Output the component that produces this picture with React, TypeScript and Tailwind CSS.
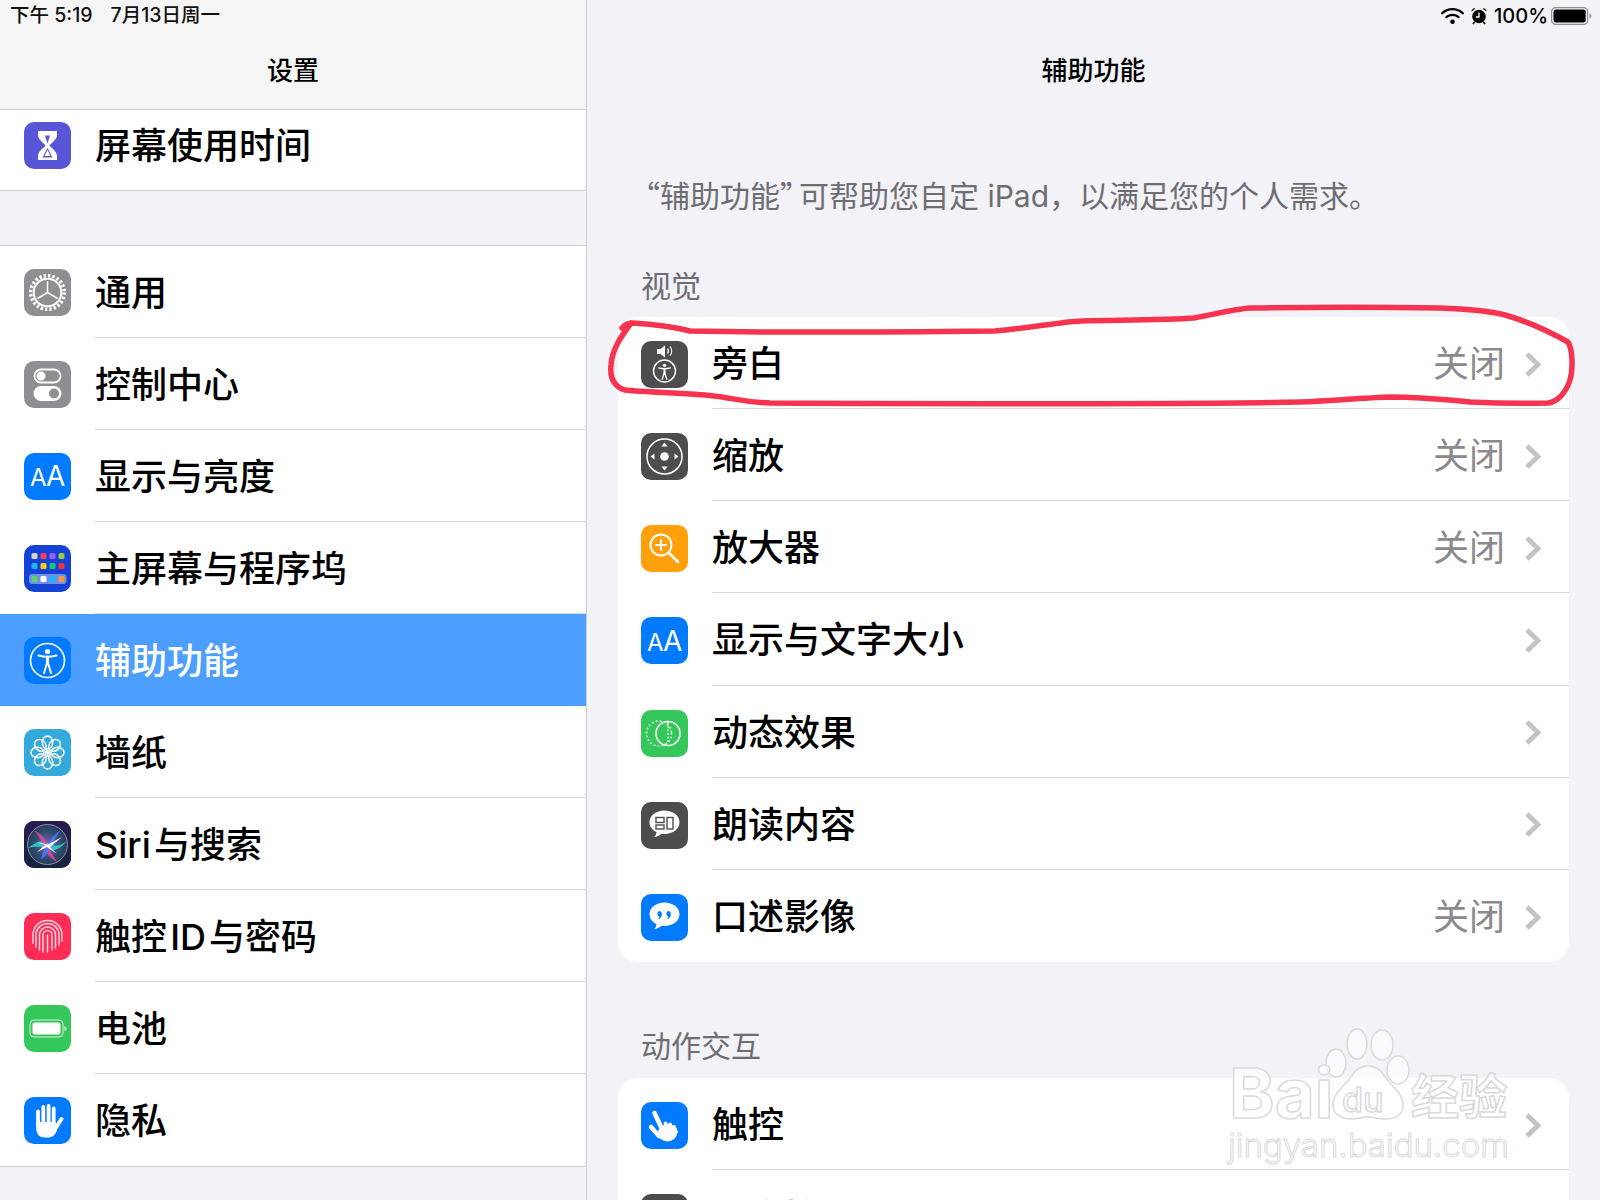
import type { ReactNode } from "react";
import { FaWifi } from "react-icons/fa6";

function IconBox({ bg, children }: { bg: string; children?: ReactNode }) {
  return (
    <div className={`flex h-[47px] w-[47px] shrink-0 items-center justify-center overflow-hidden rounded-[10px] ${bg}`}>
      {children}
    </div>
  );
}

function Svg({ children }: { children: ReactNode }) {
  return (
    <svg viewBox="0 0 47 47" className="h-[47px] w-[47px]" fill="none">
      {children}
    </svg>
  );
}

const HourglassIcon = () => (
  <Svg>
    <path d="M14 9h19v4c0 5-6 8-7.500 10.500C27 26 33 29 33 34v4H14v-4c0-5 6-8 7.500-10.500C20 21 14 18 14 13z" fill="#fff" />
    <path d="M21 13.500h5l-2.500 8zM23.500 26l5 9.500h-10z" fill="#5856d6" />
    <path d="M23.500 28l3 6h-6z" fill="#fff" />
  </Svg>
);

const GearIcon = () => (
  <Svg>
    <circle cx="23.500" cy="23.500" r="16.800" stroke="#fff" strokeWidth="3.500" strokeDasharray="2.400 1.998" />
    <circle cx="23.500" cy="23.500" r="13.800" stroke="#fff" strokeWidth="2" />
    <path d="M23.500 23.500V12M23.500 23.500l10 6M23.500 23.500l-10 6" stroke="#fff" strokeWidth="1.500" />
  </Svg>
);

const ToggleIcon = () => (
  <Svg>
    <rect x="10.500" y="8.500" width="26" height="13" rx="6.500" stroke="#fff" strokeWidth="1.800" />
    <circle cx="17" cy="15" r="4.500" fill="#fff" />
    <rect x="9.500" y="25" width="28" height="15" rx="7.500" fill="#fff" />
    <circle cx="30" cy="32.500" r="5" fill="#8e8e93" />
  </Svg>
);

const AaIcon = () => (
  <span className="text-[28px] leading-none font-normal tracking-[-0.500px] text-white">
    <span className="text-[24px]">A</span>A
  </span>
);

const HomeIcon = () => {
  const top = ["#d1d1d6", "#ff3b57", "#a05cff", "#9ccc3c"];
  const mid = ["#20b4ff", "#ffcc00", "#16c784", "#ff3030"];
  const dock = ["#5ad26a", "#ffffff", "#20b4ff", "#f59a3c"];
  return (
    <Svg>
      <rect x="5" y="29" width="37.500" height="10" rx="3" fill="#6f8fe8" />
      {top.map((c, i) => (
        <rect key={c} x={7.500 + i * 9} y="8" width="6" height="6" rx="1.500" fill={c} />
      ))}
      {mid.map((c, i) => (
        <rect key={c} x={7.500 + i * 9} y="18" width="6" height="6" rx="1.500" fill={c} />
      ))}
      {dock.map((c, i) => (
        <rect key={c} x={7.500 + i * 9} y="31" width="6" height="6" rx="1.500" fill={c} />
      ))}
    </Svg>
  );
};

const Figure = ({ cx, cy, s }: { cx: number; cy: number; s: number }) => (
  <g transform={`translate(${cx} ${cy}) scale(${s})`} stroke="#fff" strokeLinecap="round">
    <circle cx="0" cy="-9.500" r="2.600" fill="#fff" stroke="none" />
    <path d="M-9 -5.500Q0 -3 9 -5.500" strokeWidth="2" />
    <path d="M0 -4V3" strokeWidth="3.200" />
    <path d="M-0.800 3L-3.500 12M0.800 3L3.500 12" strokeWidth="2" />
  </g>
);

const AccessIcon = () => (
  <Svg>
    <circle cx="23.500" cy="23.500" r="17" stroke="#fff" strokeWidth="1.700" />
    <Figure cx={23.500} cy={24} s={1} />
  </Svg>
);

const VoiceOverIcon = () => (
  <Svg>
    <path d="M16 8h3.500l4.500-3.500v12L19.500 13H16z" fill="#fff" />
    <path d="M26.500 7.500a4 4 0 0 1 0 5M29 5.500a7 7 0 0 1 0 9" stroke="#fff" strokeWidth="1.200" />
    <circle cx="23.500" cy="30" r="11" stroke="#fff" strokeWidth="1.400" />
    <Figure cx={23.500} cy={30.500} s={0.65} />
  </Svg>
);

const FlowerIcon = () => (
  <Svg>
    {[0, 45, 90, 135, 180, 225, 270, 315].map((a) => (
      <ellipse key={a} cx="23.500" cy="13.500" rx="5.200" ry="6.500" stroke="#fff" strokeWidth="1.500" transform={`rotate(${a} 23.500 23.500)`} />
    ))}
    <circle cx="23.500" cy="23.500" r="2.500" fill="#fff" />
  </Svg>
);

const SiriIcon = () => (
  <Svg>
    <defs>
      <radialGradient id="siriGlow" cx="50%" cy="50%" r="50%">
        <stop offset="0%" stopColor="#6a6ab8" />
        <stop offset="70%" stopColor="#2f4a6c" />
        <stop offset="100%" stopColor="#263f58" />
      </radialGradient>
      <linearGradient id="siriBack" x1="0" y1="0" x2="0" y2="1">
        <stop offset="0%" stopColor="#2a1a52" />
        <stop offset="100%" stopColor="#16233f" />
      </linearGradient>
    </defs>
    <rect width="47" height="47" fill="url(#siriBack)" />
    <circle cx="23.500" cy="23.500" r="20" fill="url(#siriGlow)" stroke="#8d8fa6" strokeWidth="1" />
    <path d="M4 27Q18 16 24 22Q32 28 43 20Q32 33 23 28Q14 24 4 27z" fill="#32d2c8" opacity=".85" />
    <path d="M10 9Q22 16 24 24Q28 33 33 41Q22 35 20 26Q17 18 10 9z" fill="#e0449a" opacity=".85" />
    <path d="M37 9Q28 15 24 23Q18 31 17 39Q25 32 27 25Q31 17 37 9z" fill="#4a7dff" opacity=".85" />
    <path d="M12 21L24 23.500L38 16L26 26L33 33L23 26L13 31L21 24z" fill="#fff" />
  </Svg>
);

const FingerIcon = () => (
  <Svg>
    <g stroke="#ffd6de" strokeWidth="1.500" strokeLinecap="round">
      <path d="M9 30V22a14.500 14.500 0 0 1 29 0v6" />
      <path d="M12 34V22a11.500 11.500 0 0 1 23 0v10" />
      <path d="M15.500 37V22a8 8 0 0 1 16 0v13" />
      <path d="M19 39V22a4.500 4.500 0 0 1 9 0v15" />
      <path d="M23.500 22v17" />
    </g>
  </Svg>
);

const BatteryIcon = () => (
  <Svg>
    <rect x="6" y="15" width="33" height="17" rx="4" stroke="#fff" strokeWidth="1" opacity=".8" />
    <rect x="8.500" y="17.500" width="28" height="12" rx="2" fill="#fff" />
    <path d="M40.500 21v5c1.500-.5 2-1.500 2-2.500s-.5-2-2-2.500z" fill="#fff" opacity=".8" />
  </Svg>
);

const PrivacyIcon = () => (
  <Svg>
    <g stroke="#fff" strokeLinecap="round">
      <path d="M14 14.500V28M19.300 10V27M24.600 9V27M29.700 11.500V28" strokeWidth="3.800" />
      <path d="M31 32L37.500 22" strokeWidth="4" />
    </g>
    <path d="M12.200 25h19.500v6c3-2 1 9-6.500 9.500h-5c-5 0-8-4-8-9z" fill="#fff" />
  </Svg>
);

const DpadIcon = () => (
  <Svg>
    <circle cx="23.500" cy="23.500" r="17.500" stroke="#fff" strokeWidth="1.500" />
    <circle cx="23.500" cy="23.500" r="4.300" fill="#fff" />
    <path d="M23.500 9.500l3 4h-6zM23.500 37.500l3-4h-6zM9.500 23.500l4-3v6zM37.500 23.500l-4-3v6z" fill="#fff" />
  </Svg>
);

const MagnifierIcon = () => (
  <Svg>
    <circle cx="20" cy="20" r="10.500" stroke="#fff" strokeWidth="2" />
    <path d="M15 20h10M20 15v10" stroke="#fff" strokeWidth="2" strokeLinecap="round" />
    <path d="M28 28l9 9" stroke="#fff" strokeWidth="2.600" strokeLinecap="round" />
  </Svg>
);

const MotionIcon = () => (
  <Svg>
    <circle cx="18" cy="23.500" r="12.500" stroke="#fff" strokeWidth="1.800" strokeDasharray="0.100 3.900" strokeLinecap="round" />
    <circle cx="27" cy="23.500" r="12" stroke="#fff" strokeWidth="1.600" />
    <path d="M27 13v21" stroke="#fff" strokeWidth="1.800" strokeDasharray="0.100 3.500" strokeLinecap="round" />
  </Svg>
);

const Bubble = () => <path d="M23.500 8.500c8.300 0 15 5 15 11.800S31.800 32 23.500 32c-1 0-2-.1-3-.2-2 2-4.500 3-7.500 3.200 1.500-1.200 2.300-2.700 2.500-5C11 28 8.500 24.500 8.500 20.300 8.500 13.500 15.200 8.500 23.500 8.500z" fill="#fff" />;

const SpeakIcon = () => (
  <Svg>
    <Bubble />
    <rect x="15" y="15.500" width="8" height="5" stroke="#4d4d4f" strokeWidth="1.400" />
    <rect x="15" y="23" width="8" height="4" stroke="#4d4d4f" strokeWidth="1.400" />
    <rect x="26" y="15.500" width="6" height="11.500" stroke="#4d4d4f" strokeWidth="1.400" />
  </Svg>
);

const QuoteIcon = () => (
  <Svg>
    <Bubble />
    <path d="M18 17a3 3 0 0 1 2.800 3.200c0 2.800-1.500 4.500-4 5 1-1 1.500-2 1.500-2.700a3 3 0 0 1-.3-5.500zM27 17a3 3 0 0 1 2.800 3.200c0 2.800-1.500 4.500-4 5 1-1 1.500-2 1.500-2.700a3 3 0 0 1-.3-5.500z" fill="#007aff" />
  </Svg>
);

const TapIcon = () => (
  <Svg>
    <g stroke="#fff" strokeLinecap="round">
      <path d="M13.500 11L21 27" strokeWidth="4.500" />
      <path d="M10 25l8 9" strokeWidth="4.500" />
      <path d="M24.500 21.500l2.500 6M29 22.500l2.500 6M33 25l2 5" strokeWidth="3.800" />
    </g>
    <ellipse cx="26.500" cy="31" rx="9.500" ry="8.500" fill="#fff" />
  </Svg>
);

const Chevron = () => (
  <svg viewBox="0 0 17 27" className="h-[27px] w-[17px] shrink-0" fill="none">
    <path d="M3 3l11 10.500L3 24" stroke="#c4c4c7" strokeWidth="5" />
  </svg>
);

type SideItem = { label: string; bg: string; icon: ReactNode; active?: boolean };

const sideItems: SideItem[] = [
  { label: "通用", bg: "bg-[#8e8e93]", icon: <GearIcon /> },
  { label: "控制中心", bg: "bg-[#8e8e93]", icon: <ToggleIcon /> },
  { label: "显示与亮度", bg: "bg-[#007aff]", icon: <AaIcon /> },
  { label: "主屏幕与程序坞", bg: "bg-[#1441d6]", icon: <HomeIcon /> },
  { label: "辅助功能", bg: "bg-[#007aff]", icon: <AccessIcon />, active: true },
  { label: "墙纸", bg: "bg-[#34aadc]", icon: <FlowerIcon /> },
  { label: "Siri\u200a与搜索", bg: "bg-[#1c1c3a]", icon: <SiriIcon /> },
  { label: "触控\u200aID\u200a与密码", bg: "bg-[#ff2d55]", icon: <FingerIcon /> },
  { label: "电池", bg: "bg-[#34c759]", icon: <BatteryIcon /> },
  { label: "隐私", bg: "bg-[#007aff]", icon: <PrivacyIcon /> },
];

function SideRow({ item, last }: { item: SideItem; last: boolean }) {
  return (
    <div className={`flex h-[92px] items-center pl-6 ${item.active ? "bg-[#4c9ffe]" : "bg-white"}`}>
      <IconBox bg={item.bg}>{item.icon}</IconBox>
      <div
        className={`ml-6 flex h-full flex-1 items-center border-b pt-[2px] text-[36px] font-medium ${
          item.active ? "border-transparent text-white" : last ? "border-transparent text-black" : "border-[#d8d8da] text-black"
        }`}
      >
        {item.label}
      </div>
    </div>
  );
}

function Sidebar() {
  return (
    <aside className="flex h-full w-[587px] shrink-0 flex-col overflow-hidden border-r border-[#cfcfd3] bg-[#f2f2f7]">
      <header className="h-[110px] shrink-0 border-b border-[#cfcfd3] bg-[#f5f5f5]">
        <div className="flex h-[32px] items-center pl-[10px] text-[19.500px] leading-none font-medium text-[#111]">
          <span>下午 5:19</span>
          <span className="ml-[18px]">7月13日周一</span>
        </div>
        <div className="mt-[20px] text-center text-[26px] leading-[38px] font-medium text-black">设置</div>
      </header>
      <div className="flex h-[81px] shrink-0 items-start border-b border-[#cfcfd3] bg-white pt-3 pl-6">
        <IconBox bg="bg-[#5856d6]">
          <HourglassIcon />
        </IconBox>
        <div className="ml-6 pt-[1px] text-[36px] leading-[47px] font-medium text-black">屏幕使用时间</div>
      </div>
      <div className="h-[54px] shrink-0" />
      <div className="shrink-0 border-y border-[#cfcfd3] bg-white">
        {sideItems.map((item, i) => (
          <SideRow key={item.label} item={item} last={i === sideItems.length - 1} />
        ))}
      </div>
    </aside>
  );
}

type MainItem = { label: string; bg: string; icon: ReactNode; value?: string };

const visionItems: MainItem[] = [
  { label: "旁白", bg: "bg-[#4d4d4f]", icon: <VoiceOverIcon />, value: "关闭" },
  { label: "缩放", bg: "bg-[#4d4d4f]", icon: <DpadIcon />, value: "关闭" },
  { label: "放大器", bg: "bg-[#ff9f0a]", icon: <MagnifierIcon />, value: "关闭" },
  { label: "显示与文字大小", bg: "bg-[#007aff]", icon: <AaIcon /> },
  { label: "动态效果", bg: "bg-[#34c759]", icon: <MotionIcon /> },
  { label: "朗读内容", bg: "bg-[#4d4d4f]", icon: <SpeakIcon /> },
  { label: "口述影像", bg: "bg-[#007aff]", icon: <QuoteIcon />, value: "关闭" },
];

const actionItems: MainItem[] = [
  { label: "触控", bg: "bg-[#007aff]", icon: <TapIcon /> },
  { label: "切换控制", bg: "bg-[#4d4d4f]", icon: null },
];

function MainRow({ item, last }: { item: MainItem; last: boolean }) {
  return (
    <div className="flex h-[92.150px] items-center pl-[23px]">
      <div className="mt-[3px]">
        <IconBox bg={item.bg}>{item.icon}</IconBox>
      </div>
      <div className={`ml-6 flex h-full flex-1 items-center pt-[3px] pr-7 ${last ? "" : "border-b border-[#d8d8da]"}`}>
        <span className="flex-1 text-[36px] font-medium text-black">{item.label}</span>
        {item.value && <span className="mr-[19px] text-[36px] text-[#8a8a8e]">{item.value}</span>}
        <Chevron />
      </div>
    </div>
  );
}

function AlarmIcon() {
  return (
    <svg viewBox="0 0 16 18" className="h-[18px] w-[16px]">
      <circle cx="8" cy="9.500" r="6.800" fill="#000" />
      <path d="M8 5.500v4.500H4.800" stroke="#fff" strokeWidth="1.300" fill="none" />
      <path d="M0.500 4.500a3 3 0 0 1 4-3zM15.500 4.500a3 3 0 0 0-4-3z" fill="#000" />
      <path d="M3.500 15l-1.500 2M12.500 15l1.500 2" stroke="#000" strokeWidth="1.500" />
    </svg>
  );
}

function BatteryStatus() {
  return (
    <svg viewBox="0 0 41 18" className="h-[18px] w-[41px]">
      <rect x="0.600" y="0.600" width="36" height="16.800" rx="4" fill="none" stroke="#8e8e93" strokeWidth="1.200" />
      <rect x="2.500" y="2.500" width="32.200" height="13" rx="2.500" fill="#000" />
      <path d="M38.500 6.500v5c1.200-.4 1.800-1.400 1.800-2.500s-.6-2.100-1.800-2.500z" fill="#8e8e93" />
    </svg>
  );
}

function Main() {
  return (
    <main className="h-full min-w-0 flex-1 overflow-hidden bg-[#f2f2f7]">
      <div className="flex h-[32px] items-center justify-end pr-[8px] text-black">
        <FaWifi className="h-[20px] w-[23px]" />
        <span className="ml-[7px]">
          <AlarmIcon />
        </span>
        <span className="mr-[3px] ml-[7px] text-[20px] leading-none font-medium">100%</span>
        <BatteryStatus />
      </div>
      <div className="mt-[20px] text-center text-[26px] leading-[38px] font-medium text-black">辅助功能</div>
      <p className="mt-[83px] pl-[43px] text-[30px] leading-[42px] whitespace-nowrap text-[#6d6d72]">
        <span className="font-['Noto_Sans_CJK_SC']">“</span>辅助功能<span className="mr-[-11px] font-['Noto_Sans_CJK_SC']">”</span>可帮助您自定 iPad，以满足您的个人需求。
      </p>
      <h3 className="mt-[48px] pl-[54px] text-[30px] leading-[42px] font-normal text-[#6d6d72]">视觉</h3>
      <div className="mx-[31px] mt-[10px] overflow-hidden rounded-[20px] bg-white">
        {visionItems.map((item, i) => (
          <MainRow key={item.label} item={item} last={i === visionItems.length - 1} />
        ))}
      </div>
      <h3 className="mt-[63px] pl-[54px] text-[30px] leading-[42px] font-normal text-[#6d6d72]">动作交互</h3>
      <div className="mx-[31px] mt-[11px] rounded-t-[20px] bg-white">
        {actionItems.map((item, i) => (
          <MainRow key={item.label} item={item} last={i === actionItems.length - 1} />
        ))}
      </div>
    </main>
  );
}

// hand-drawn red outline round the first row
function Scribble() {
  return (
    <svg viewBox="0 0 1600 1200" className="pointer-events-none absolute inset-0 h-[1200px] w-[1600px]" fill="none">
      <path
        d="M622 328Q626 323 633 323C650 324 670 326 690 331C780 333 900 332 995 331C1030 328 1060 322 1081 321C1130 320 1170 320 1194 318C1220 313 1235 309 1250 308C1320 307 1380 307 1440 308C1470 309 1490 311 1505 315C1530 322 1550 332 1568 342C1573 350 1573 370 1570 380C1566 392 1558 402 1548 403C1510 404 1490 403 1470 402C1440 399 1410 397 1390 397C1360 398 1330 401 1300 402C1200 404 1000 404 770 403C745 402 735 399 722 397C690 392 650 393 625 390C612 386 610 375 611 365C612 350 620 338 631 323"
        stroke="#f7344f"
        strokeWidth="5.500"
        strokeLinecap="round"
        strokeLinejoin="round"
      />
    </svg>
  );
}

// baidu jingyan watermark, bottom right
function Watermark() {
  const mark = { fill: "#ffffff", fillOpacity: 0.62, stroke: "#d9d9de", strokeWidth: 1.500 };
  return (
    <svg viewBox="0 0 1600 1200" className="pointer-events-none absolute inset-0 h-[1200px] w-[1600px]">
      <ellipse cx="1357" cy="1044" rx="10" ry="15" {...mark} />
      <ellipse cx="1382" cy="1045" rx="11" ry="15" {...mark} />
      <ellipse cx="1336" cy="1063" rx="10" ry="14" {...mark} />
      <ellipse cx="1398" cy="1070" rx="11" ry="14" {...mark} />
      <path d="M1368 1066c12 0 16 10 22 17 7 7 13 13 13 22 0 10-8 14-18 14-7 0-11-2-17-2s-10 2-17 2c-10 0-18-5-18-14 0-9 6-15 13-22 6-7 10-17 22-17z" {...mark} />
      <text x="1229" y="1118" fontFamily="Inter, sans-serif" fontSize="69" fontWeight="700" {...mark}>Bai</text>
      <text x="1342" y="1112" fontFamily="Inter, sans-serif" fontSize="34" fontWeight="500" {...mark}>du</text>
      <text x="1411" y="1114" fontFamily="'Noto Sans CJK SC', sans-serif" fontSize="48" fontWeight="700" {...mark}>经验</text>
      <text x="1228" y="1157" fontFamily="Inter, sans-serif" fontSize="33" fontWeight="300" {...mark} strokeWidth={1}>jingyan.baidu.com</text>
    </svg>
  );
}

export default function App() {
  return (
    <div className="relative flex h-[1200px] w-[1600px] overflow-hidden bg-[#f2f2f7] font-['Inter','Noto_Sans_CJK_SC',sans-serif]">
      <Sidebar />
      <Main />
      <Scribble />
      <Watermark />
    </div>
  );
}
